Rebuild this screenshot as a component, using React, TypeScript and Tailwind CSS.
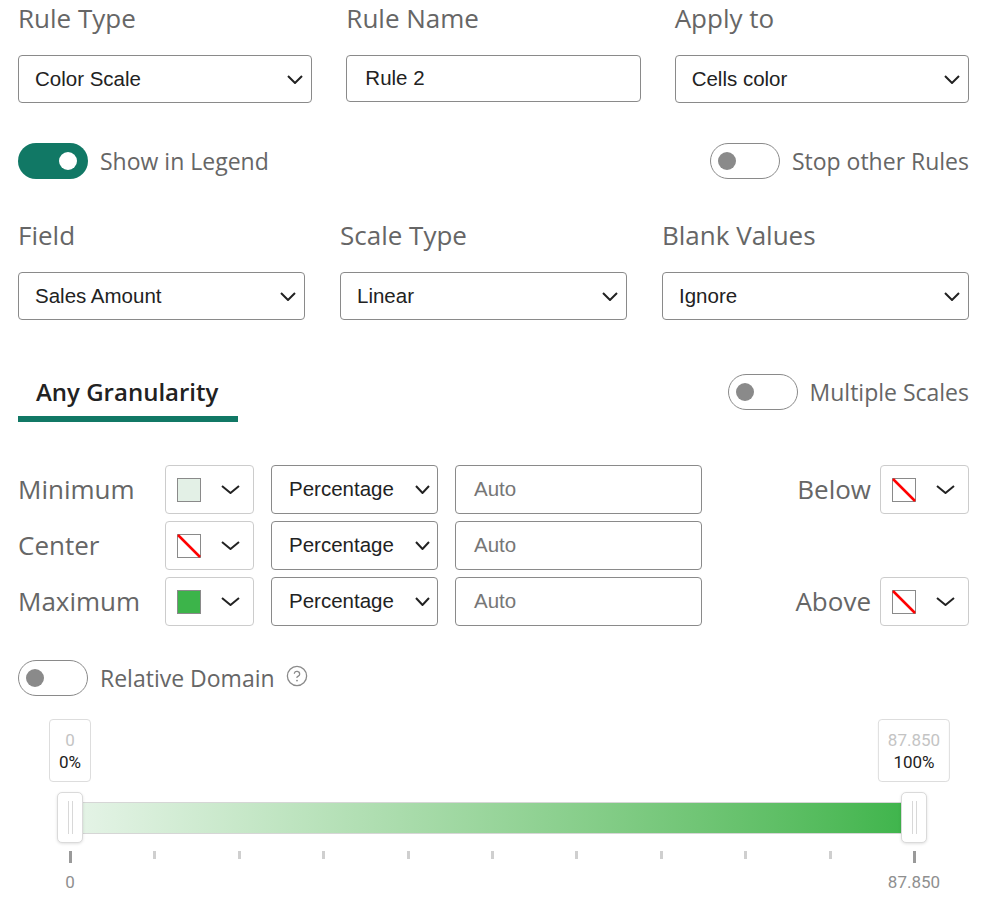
import React from "react";

const LABEL = "font-['Open_Sans',sans-serif] text-[23px] text-[#666666]";
const TITLE = "font-['Open_Sans',sans-serif] text-[26px] text-[#666666]";
const FIELD = "font-['Liberation_Sans',Arial,sans-serif] text-[20.5px] text-[#222222]";

function Chevron({ w = 16 }: { w?: number }) {
  return (
    <svg width={w} height={9} viewBox={`0 0 ${w} 9`} fill="none" className="shrink-0">
      <polyline points={`1,1 ${w / 2},8 ${w - 1},1`} stroke="#222" strokeWidth="2" strokeLinejoin="miter" />
    </svg>
  );
}

function Select({ value }: { value: string }) {
  return (
    <div className={`h-[48px] flex items-center justify-between pl-[16px] pr-[8px] border border-[#8a8a8a] rounded-[4px] bg-white ${FIELD}`}>
      <span>{value}</span>
      <Chevron />
    </div>
  );
}

function Toggle({ on, label, className = "" }: { on?: boolean; label: string; className?: string }) {
  return (
    <div className={`flex items-center gap-[12px] ${className}`}>
      {on ? (
        <div className="w-[70px] h-[36px] rounded-full bg-[#117865] flex items-center justify-end pr-[11px]">
          <div className="w-[18px] h-[18px] rounded-full bg-white" />
        </div>
      ) : (
        <div className="w-[70px] h-[36px] rounded-full border border-[#8a8a8a] bg-white flex items-center pl-[7px]">
          <div className="w-[18px] h-[18px] rounded-full bg-[#8a8a8a]" />
        </div>
      )}
      <span className={LABEL}>{label}</span>
    </div>
  );
}

function Swatch({ color }: { color?: string }) {
  if (color) {
    return <div className="w-[24px] h-[24px] border border-[#8a8a8a]" style={{ backgroundColor: color }} />;
  }
  return (
    <svg width="24" height="24" viewBox="0 0 24 24" className="shrink-0">
      <rect x="0.5" y="0.5" width="23" height="23" fill="#fff" stroke="#8a8a8a" />
      <line x1="1" y1="1" x2="23" y2="23" stroke="#ff0000" strokeWidth="2.5" />
    </svg>
  );
}

function ColorButton({ color }: { color?: string }) {
  return (
    <div className="w-[89px] h-[49px] border border-[#cccccc] rounded-[4px] bg-white flex items-center pl-[11px] pr-[13px] justify-between">
      <Swatch color={color} />
      <Chevron w={19} />
    </div>
  );
}

type Row = { label: string; color?: string; side?: { label: string } };

const rows: Row[] = [
  { label: "Minimum", color: "#e3f0e6", side: { label: "Below" } },
  { label: "Center" },
  { label: "Maximum", color: "#3cb44a", side: { label: "Above" } },
];

function ScaleRow({ row }: { row: Row }) {
  return (
    <div className="flex items-center h-[49px]">
      <span className={`w-[147px] ${TITLE}`}>{row.label}</span>
      <ColorButton color={row.color} />
      <div className={`ml-[17px] w-[167px] h-[49px] flex items-center justify-between pl-[17px] pr-[7px] border border-[#8a8a8a] rounded-[4px] ${FIELD}`}>
        <span>Percentage</span>
        <Chevron w={15} />
      </div>
      <div className={`ml-[17px] w-[247px] h-[49px] flex items-center pl-[18px] border border-[#8a8a8a] rounded-[4px] ${FIELD} text-[#767676]`}>
        Auto
      </div>
      <div className="flex-1 flex justify-end items-center">
        {row.side && (
          <>
            <span className={TITLE}>{row.side.label}</span>
            <div className="ml-[9px]">
              <ColorButton />
            </div>
          </>
        )}
      </div>
    </div>
  );
}

const MAX = 87.85;
const thumbs = [
  { value: 0, pct: 0, text: "0" },
  { value: MAX, pct: 100, text: "87.850" },
];

function Slider() {
  return (
    <div className="relative ml-[52px] w-[844px] h-[175px] font-['Roboto',sans-serif]">
      {thumbs.map((t) => (
        <div
          key={"tip" + t.pct}
          className="absolute top-0 -translate-x-1/2 h-[63px] px-[9px] border border-[#dddddd] rounded-[4px] bg-white flex flex-col items-center justify-center leading-[22px] text-[17px]"
          style={{ left: `${t.pct}%` }}
        >
          <span className="text-[#c4c4c4]">{t.text}</span>
          <span className="text-[#222]">{t.pct}%</span>
        </div>
      ))}
      <div className="absolute left-0 right-0 top-[83px] h-[32px] border-y border-[#d6d6d6] bg-gradient-to-r from-[#e6f4e8] to-[#3cb44a]" />
      {thumbs.map((t) => (
        <div
          key={"th" + t.pct}
          className="absolute top-[73px] -translate-x-1/2 w-[26px] h-[51px] bg-white border border-[#dadada] rounded-[5px] shadow-[0_1px_3px_rgba(0,0,0,0.12)] flex justify-center gap-[3px] pt-[8px]"
          style={{ left: `${t.pct}%` }}
        >
          <div className="w-[1px] h-[33px] bg-[#d8d8d8]" />
          <div className="w-[1px] h-[33px] bg-[#d8d8d8]" />
        </div>
      ))}
      <div className="absolute top-[132px] -left-[1px] w-[847px] flex justify-between items-start">
        {Array.from({ length: 11 }).map((_, i) => (
          <div
            key={i}
            className={i === 0 || i === 10 ? "w-[3px] h-[12px] bg-[#9a9a9a]" : "w-[3px] h-[8px] bg-[#cfcfcf]"}
          />
        ))}
      </div>
      {thumbs.map((t) => (
        <span
          key={"lb" + t.pct}
          className="absolute top-[151px] -translate-x-1/2 text-[17px] text-[#8f8f8f] leading-[24px]"
          style={{ left: `${t.pct}%` }}
        >
          {t.text}
        </span>
      ))}
    </div>
  );
}

export default function App() {
  return (
    <div className="w-[988px] min-h-[903px] bg-white pl-[18px] pr-[19px]">
      <div className="grid grid-cols-3 gap-x-[34px]">
        <div className="flex flex-col">
          <span className={`h-[36px] leading-[36px] ${TITLE}`}>Rule Type</span>
          <div className="mt-[19px]"><Select value="Color Scale" /></div>
        </div>
        <div className="flex flex-col">
          <span className={`h-[36px] leading-[36px] ${TITLE}`}>Rule Name</span>
          <div className={`mt-[19px] h-[47px] flex items-center pl-[18px] border border-[#8a8a8a] rounded-[4px] ${FIELD}`}>Rule 2</div>
        </div>
        <div className="flex flex-col">
          <span className={`h-[36px] leading-[36px] ${TITLE}`}>Apply to</span>
          <div className="mt-[19px]"><Select value="Cells color" /></div>
        </div>
      </div>

      <div className="mt-[40px] flex justify-between items-center">
        <Toggle on label="Show in Legend" />
        <Toggle label="Stop other Rules" />
      </div>

      <div className="mt-[38px] grid grid-cols-[287px_287px_1fr] gap-x-[35px]">
        {[
          ["Field", "Sales Amount"],
          ["Scale Type", "Linear"],
          ["Blank Values", "Ignore"],
        ].map(([l, v]) => (
          <div key={l} className="flex flex-col">
            <span className={`h-[36px] leading-[36px] ${TITLE}`}>{l}</span>
            <div className="mt-[19px]"><Select value={v} /></div>
          </div>
        ))}
      </div>

      <div className="mt-[54px] flex justify-between items-start">
        <div className="w-[220px] flex flex-col">
          <span className="h-[36px] leading-[36px] pl-[18px] font-['Open_Sans',sans-serif] text-[24px] font-semibold text-[#222222] whitespace-nowrap">
            Any Granularity
          </span>
          <div className="mt-[6px] h-[6px] bg-[#117865]" />
        </div>
        <Toggle label="Multiple Scales" />
      </div>

      <div className="mt-[43px] flex flex-col gap-[7px]">
        {rows.map((r) => (
          <ScaleRow key={r.label} row={r} />
        ))}
      </div>

      <div className="mt-[34px] flex items-center">
        <Toggle label="Relative Domain" />
        <svg width="22" height="22" viewBox="0 0 24 24" fill="none" stroke="#8a8a8a" strokeWidth="1.4" strokeLinecap="round" className="ml-[11px] -mt-[4px]">
          <circle cx="12" cy="12" r="10.5" />
          <path d="M9.09 9a3 3 0 0 1 5.83 1c0 2-3 2.5-3 3.5" />
          <path d="M12 17h.01" strokeWidth="2" />
        </svg>
      </div>

      <div className="mt-[23px]">
        <Slider />
      </div>
    </div>
  );
}
